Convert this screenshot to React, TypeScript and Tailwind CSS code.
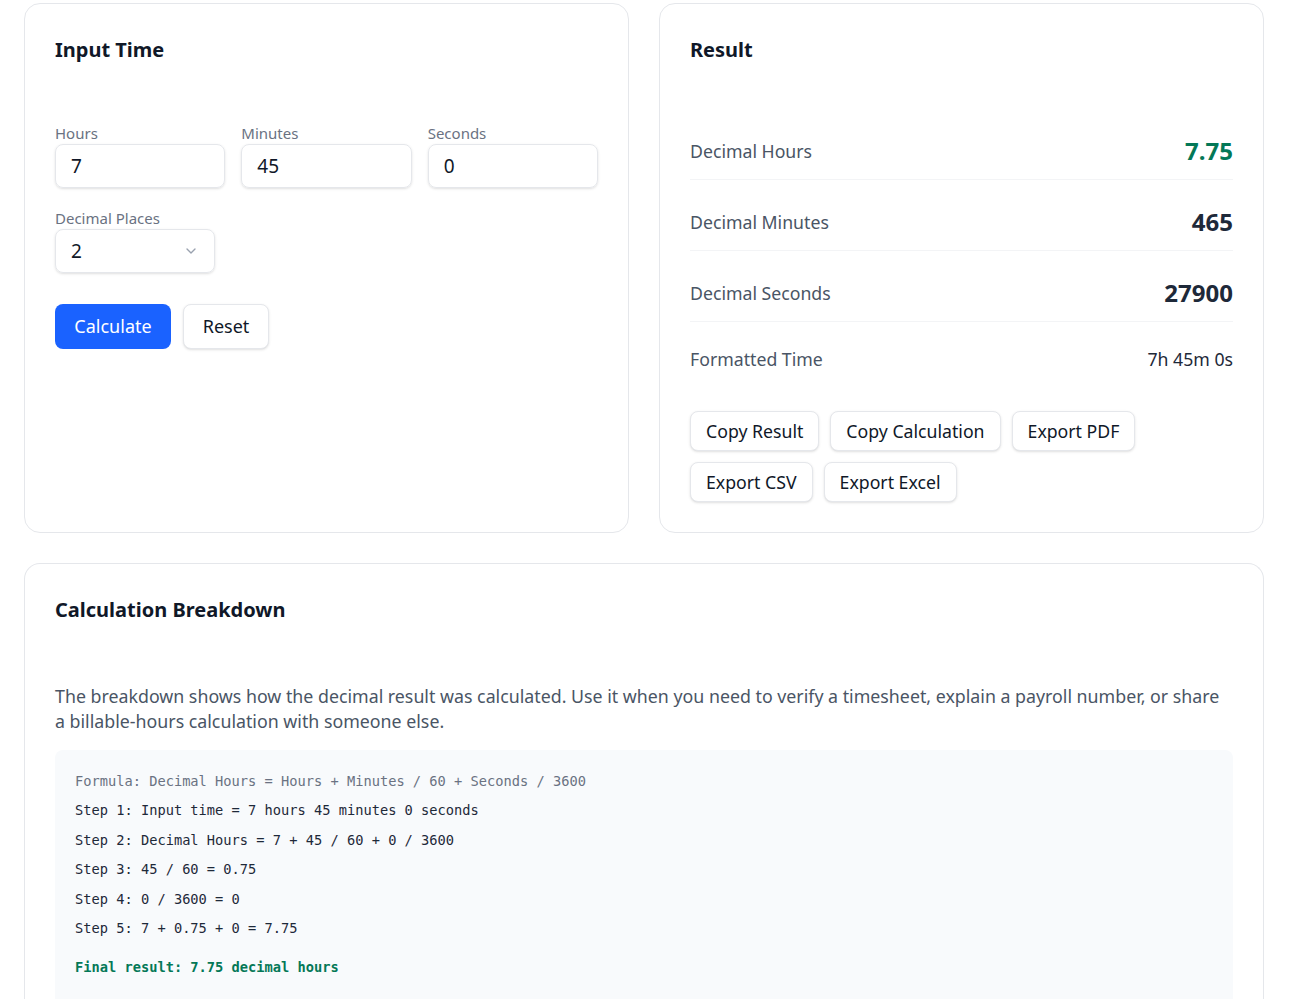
import { ChevronDown } from 'lucide-react';

const font = { fontFamily: '"Noto Sans", "Liberation Sans", sans-serif' };

function Field({ label, value }: { label: string; value: string }) {
  return (
    <div className="flex flex-col">
      <label className="text-[15px] leading-[22px] text-gray-500">{label}</label>
      <div className="h-[44px] rounded-lg border border-gray-200 px-[15px] flex items-center text-[19px] text-gray-900 shadow-sm">
        {value}
      </div>
    </div>
  );
}

function ResultRow({ label, value, valueClass, last }: { label: string; value: string; valueClass: string; last?: boolean }) {
  return (
    <div className={`flex items-center justify-between py-[12px] ${last ? '' : 'border-b border-gray-100 mb-[14px]'}`}>
      <span className="text-[17.7px] leading-[22px] text-gray-600">{label}</span>
      <span className={valueClass}>{value}</span>
    </div>
  );
}

function SmallButton({ children }: { children: string }) {
  return (
    <button className="h-[40px] px-[15px] rounded-lg border border-gray-200 bg-white text-[17.7px] text-gray-900 shadow-sm">
      {children}
    </button>
  );
}

export default function App() {
  const steps = [
    'Step 1: Input time = 7 hours 45 minutes 0 seconds',
    'Step 2: Decimal Hours = 7 + 45 / 60 + 0 / 3600',
    'Step 3: 45 / 60 = 0.75',
    'Step 4: 0 / 3600 = 0',
    'Step 5: 7 + 0.75 + 0 = 7.75',
  ];

  return (
    <div className="bg-white min-h-screen pt-[3px]" style={font}>
      <div className="w-[1240px] ml-[24px]">
        <div className="grid grid-cols-2 gap-[30px]">
          {/* Input */}
          <div className="h-[530px] rounded-2xl border border-gray-200 p-[30px] pt-[33px]">
            <h2 className="text-[20px] font-bold text-gray-900 leading-[26px]">Input Time</h2>
            <div className="grid grid-cols-3 gap-[16px] mt-[59px]">
              <Field label="Hours" value="7" />
              <Field label="Minutes" value="45" />
              <Field label="Seconds" value="0" />
            </div>
            <div className="mt-[19px] flex flex-col w-[160px]">
              <label className="text-[15px] leading-[22px] text-gray-500">Decimal Places</label>
              <div className="h-[44px] rounded-lg border border-gray-200 px-[15px] flex items-center justify-between text-[19px] text-gray-900 shadow-sm">
                2
                <ChevronDown className="w-4 h-4 text-gray-400" />
              </div>
            </div>
            <div className="flex gap-[12px] mt-[31px]">
              <button className="h-[45px] w-[116px] rounded-lg bg-[#1a62ff] text-white text-[18px]">Calculate</button>
              <button className="h-[45px] w-[86px] rounded-lg border border-gray-200 bg-white text-[18px] text-gray-900 shadow-sm">Reset</button>
            </div>
          </div>

          {/* Result */}
          <div className="h-[530px] rounded-2xl border border-gray-200 p-[30px] pt-[33px]">
            <h2 className="text-[20px] font-bold text-gray-900 leading-[26px]">Result</h2>
            <div className="mt-[60px]">
              <ResultRow label="Decimal Hours" value="7.75" valueClass="text-[24px] leading-[32px] font-bold text-[#047857]" />
              <ResultRow label="Decimal Minutes" value="465" valueClass="text-[24px] leading-[32px] font-bold text-gray-800" />
              <ResultRow label="Decimal Seconds" value="27900" valueClass="text-[24px] leading-[32px] font-bold text-gray-800" />
              <ResultRow label="Formatted Time" value="7h 45m 0s" valueClass="text-[17.7px] leading-[22px] text-gray-800" last />
            </div>
            <div className="flex flex-wrap gap-[11px] mt-[29px]">
              <SmallButton>Copy Result</SmallButton>
              <SmallButton>Copy Calculation</SmallButton>
              <SmallButton>Export PDF</SmallButton>
              <SmallButton>Export CSV</SmallButton>
              <SmallButton>Export Excel</SmallButton>
            </div>
          </div>
        </div>

        {/* Breakdown */}
        <div className="mt-[30px] rounded-t-2xl border border-b-0 border-gray-200 px-[30px] pt-[33px]">
          <h2 className="text-[20px] font-bold text-gray-900 leading-[26px]">Calculation Breakdown</h2>
          <p className="mt-[61px] text-[17.8px] leading-[25px] text-gray-600">
            The breakdown shows how the decimal result was calculated. Use it when you need to verify a timesheet, explain a payroll number, or share a billable-hours calculation with someone else.
          </p>
          <div
            className="mt-[16px] bg-[#f8fafc] rounded-lg px-[20px] pt-[21px] pb-[30px] text-[13.7px] text-gray-800"
            style={{ fontFamily: '"DejaVu Sans Mono", "Liberation Mono", monospace' }}
          >
            <div className="leading-[20px] text-gray-500">Formula: Decimal Hours = Hours + Minutes / 60 + Seconds / 3600</div>
            {steps.map((s) => (
              <div key={s} className="leading-[20px] mt-[9.4px]">{s}</div>
            ))}
            <div className="leading-[20px] mt-[19px] font-bold text-[#047857]">Final result: 7.75 decimal hours</div>
          </div>
        </div>
      </div>
    </div>
  );
}
